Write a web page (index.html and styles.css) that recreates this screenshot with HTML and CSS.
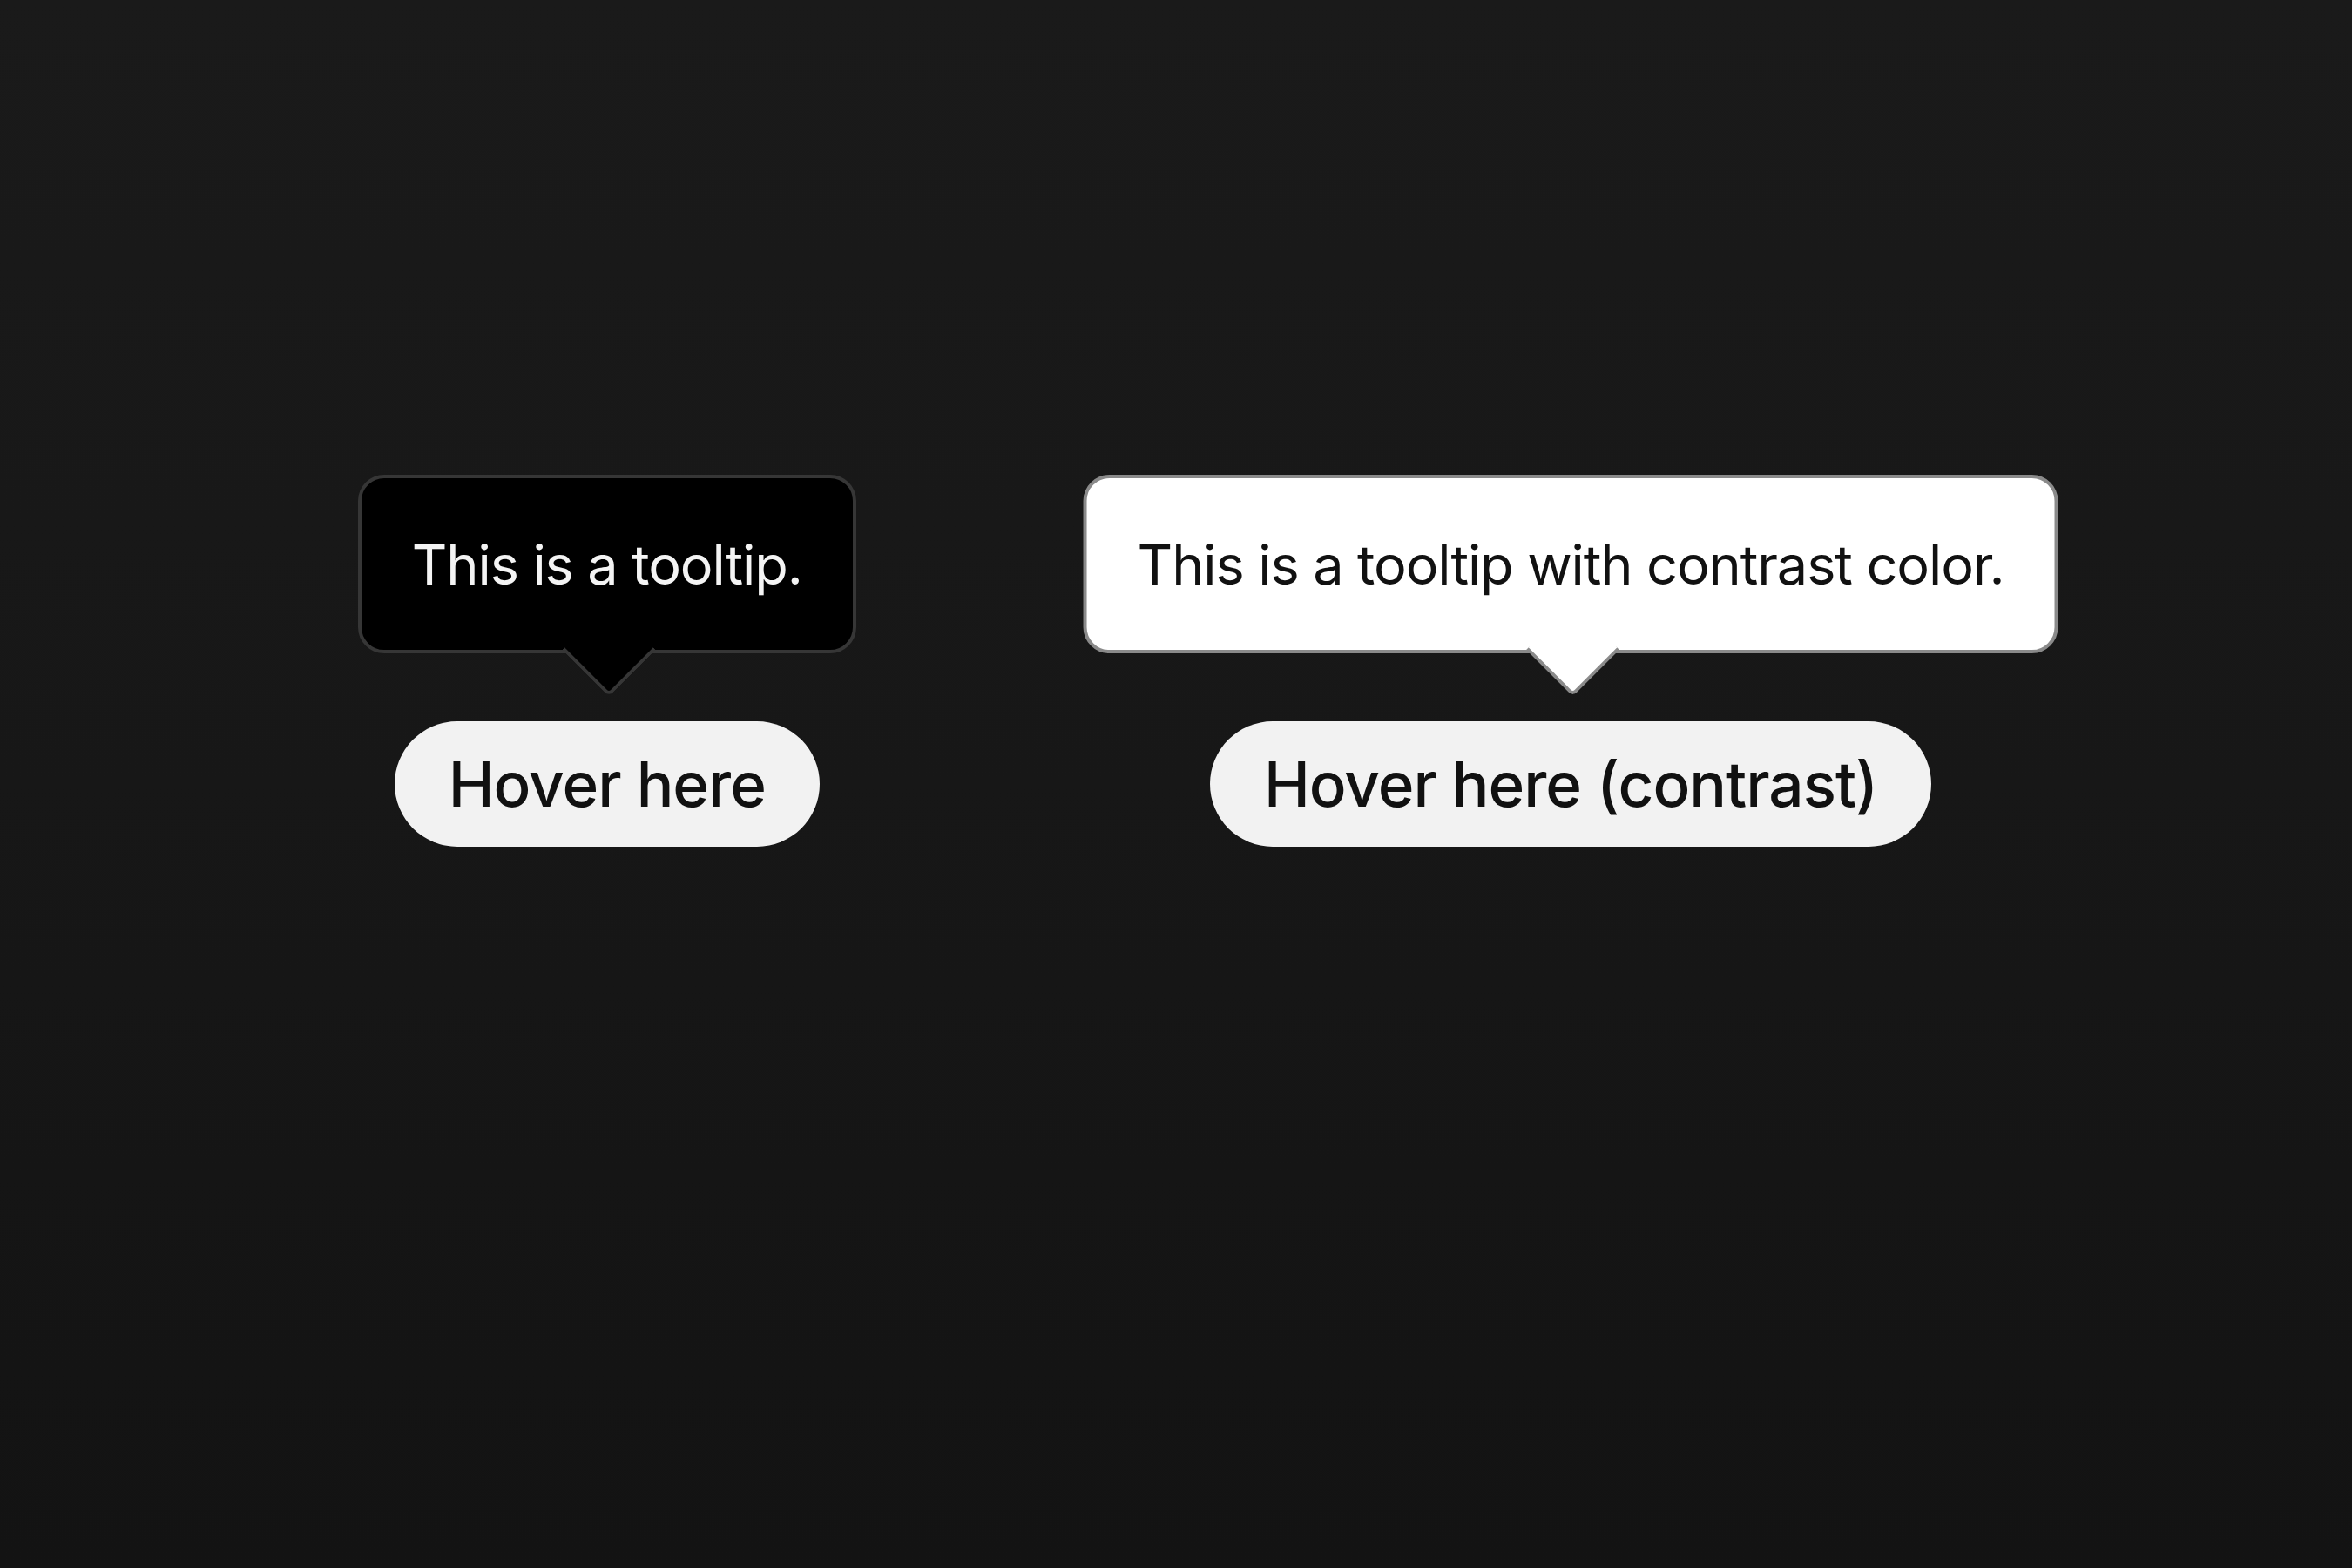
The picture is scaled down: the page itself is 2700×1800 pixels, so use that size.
FILE: index.html
```html
<!DOCTYPE html>
<html lang="en">
<head>
<meta charset="utf-8">
<title>Tooltips</title>
<link rel="stylesheet" href="styles.css">
</head>
<body>
<main class="stage">
  <div class="anchor">
    <div class="tip tip-dark" role="tooltip">This is a tooltip.</div>
    <button class="btn" type="button">Hover here</button>
  </div>
  <div class="anchor">
    <div class="tip tip-light" role="tooltip">This is a tooltip with contrast color.</div>
    <button class="btn" type="button">Hover here (contrast)</button>
  </div>
</main>
</body>
</html>
```
FILE: styles.css
```css
* { box-sizing: border-box; }

html, body {
  margin: 0;
  height: 100%;
}

body {
  background: linear-gradient(180deg, #1a1a1a 0%, #171717 50%, #131313 100%);
  font-family: Inter, "Noto Sans", "Liberation Sans", sans-serif;
}

.stage {
  height: 100vh;
  display: flex;
  align-items: center;
  justify-content: center;
  gap: 448px;
  padding-right: 30px;
}

.anchor {
  position: relative;
  display: flex;
  justify-content: center;
}

.btn {
  height: 144px;
  padding: 0 62px;
  border: 0;
  border-radius: 72px;
  background: #f2f2f2;
  color: #111111;
  font-family: inherit;
  font-size: 71px;
  font-weight: 500;
  letter-spacing: -1px;
  white-space: nowrap;
}

.tip {
  position: absolute;
  bottom: calc(100% + 78px);
  left: 50%;
  transform: translateX(-50%);
  height: 205px;
  padding: 0 58px;
  display: flex;
  align-items: center;
  border-radius: 30px;
  border: 4px solid;
  font-size: 63px;
  font-weight: 400;
  letter-spacing: -1.1px;
  white-space: nowrap;
}

.tip::after {
  content: "";
  position: absolute;
  left: 50%;
  bottom: -38px;
  width: 72px;
  height: 72px;
  margin-left: -36px;
  border-style: solid;
  border-width: 0 4px 4px 0;
  border-bottom-right-radius: 7px;
  transform: rotate(45deg);
}

.tip-dark {
  background: #000000;
  border-color: #363636;
  color: #f4f4f4;
}

.tip-dark::after {
  background: #000000;
  border-color: #363636;
}

.tip-light {
  background: #ffffff;
  border-color: #8a8a8a;
  color: #111111;
}

.tip-light::after {
  background: #ffffff;
  border-color: #8a8a8a;
}
```
